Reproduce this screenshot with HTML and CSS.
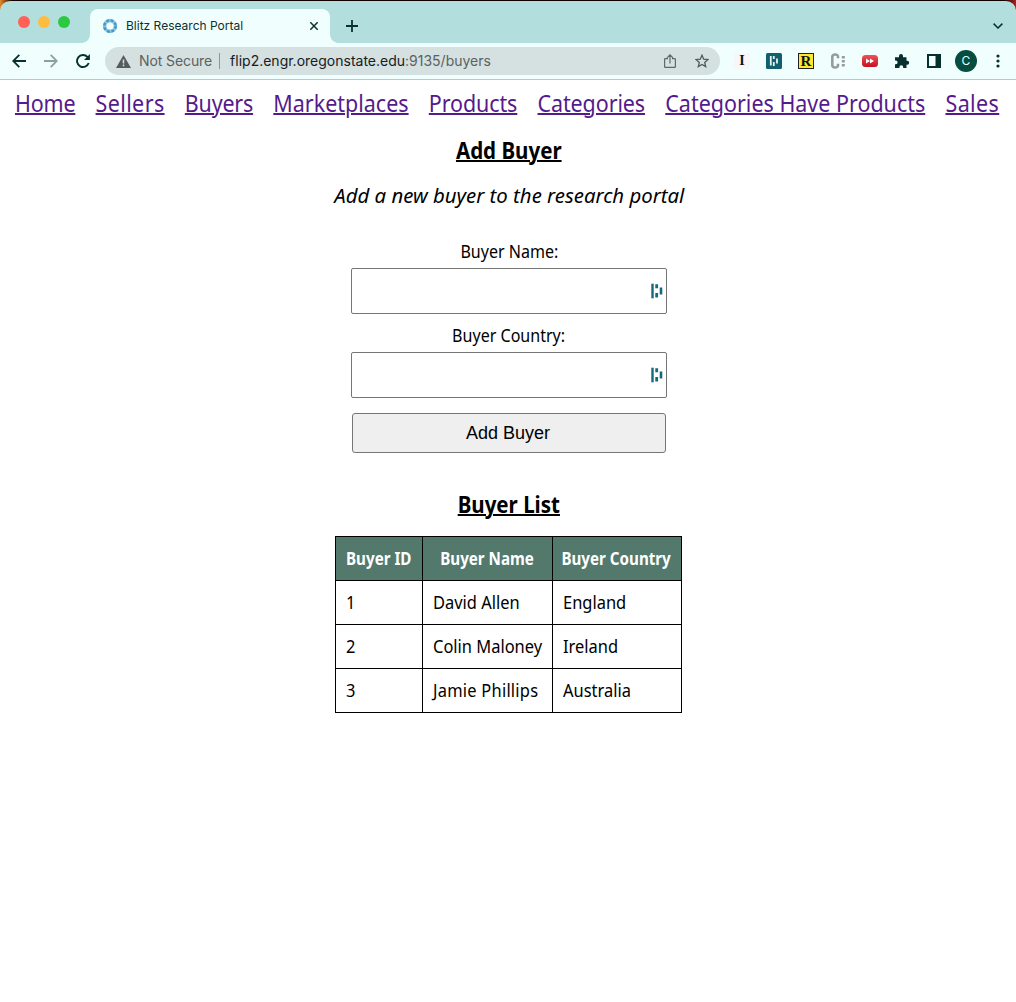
FILE: index.html
```html
<!DOCTYPE html>
<html lang="en">
<head>
<meta charset="utf-8">
<title>Blitz Research Portal</title>
<link rel="stylesheet" href="styles.css">
</head>
<body>
<div class="browser">
  <header class="tabstrip">
    <div class="lights"><i class="light red"></i><i class="light amber"></i><i class="light green"></i></div>
    <div class="tab">
      <svg class="favicon" width="16" height="16" viewBox="0 0 16 16" fill="none"><circle cx="8" cy="8" r="5.400" stroke="#8fc4e3" stroke-width="3.600"/><circle cx="8" cy="8" r="5.700" stroke="#4597c6" stroke-width="2.400" stroke-dasharray="2.800 1.680"/></svg>
      <span class="tab-title">Blitz Research Portal</span>
      <svg class="tab-close" width="10" height="10" viewBox="0 0 10 10" stroke="#0b3030" stroke-width="1.5"><path d="M1.3 1.3l7.4 7.4M8.7 1.3l-7.4 7.4"/></svg>
    </div>
    <svg class="new-tab" width="12" height="12" viewBox="0 0 12 12" stroke="#0b3030" stroke-width="1.8"><path d="M6 0v12M0 6h12"/></svg>
    <svg class="tab-search" width="10" height="6" viewBox="0 0 10 6" fill="none" stroke="#0b3030" stroke-width="1.5"><path d="M.6.6L5 5 9.400.6"/></svg>
  </header>
  <div class="toolbar">
    <svg class="nav-icon" width="14" height="14" viewBox="0 0 14 14" fill="none" stroke="#06302e" stroke-width="1.8"><path d="M14 7H1.500M7.300.8L1.200 7l6.100 6.200"/></svg>
    <svg class="nav-icon" width="14" height="14" viewBox="0 0 14 14" fill="none" stroke="#8aa3a2" stroke-width="1.800"><path d="M0 7h12.500M6.700.8L12.800 7l-6.100 6.200"/></svg>
    <svg class="nav-icon" width="14" height="14" viewBox="0 0 14 14" fill="none" stroke="#06302e" stroke-width="1.900"><path d="M12.700 9A6 6 0 1 1 11.400 2.900L13 4.500"/><path d="M13.900.1v5.900H8z" fill="#06302e" stroke="none"/></svg>
    <div class="omnibox">
      <svg width="15" height="13" viewBox="0 0 15 13"><path d="M7.500 0L15 13H0z" fill="#565c5c"/><path d="M7.500 4.500v4M7.500 9.500v1.700" stroke="#d5e0e0" stroke-width="1.500"/></svg>
      <span class="not-secure">Not Secure</span>
      <span class="divider"></span>
      <span class="url"><b>flip2.engr.oregonstate.edu</b>:9135/buyers</span>
      <svg class="share" width="12" height="14" viewBox="0 0 12 14" fill="none" stroke="#5d6b6b" stroke-width="1.200"><path d="M4 4.600H1.200A.6.6 0 0 0 .6 5.200v7.600a.6.6 0 0 0 .6.6h9.600a.6.6 0 0 0 .6-.6V5.200a.6.6 0 0 0-.6-.6H8M6 9.500V1M3 3.800l3-3 3 3"/></svg>
      <svg width="14" height="14" viewBox="0 0 14 14" fill="none" stroke="#4f5d5d" stroke-width="1.300"><path d="M7 1.200l1.700 4 4.300.4-3.300 2.800 1 4.200L7 10.400l-3.700 2.200 1-4.200L1 5.600l4.300-.4z"/></svg>
    </div>
    <div class="extensions">
      <span class="ext ext-i">I</span>
      <svg width="16" height="16" viewBox="0 0 16 16"><rect width="16" height="16" rx="1.500" fill="#116070"/><path d="M4.800 3v9.500M7.800 3v3M7.800 9v4M11 5.500v5" stroke="#e6f3f3" stroke-width="1.800"/></svg>
      <span class="ext ext-r">R</span>
      <svg width="16" height="16" viewBox="0 0 16 16" fill="none" stroke="#969b9b"><path d="M8 5.200V4Q8 1.500 5.200 1.500T2.300 4v8q0 2.500 2.900 2.500T8 12v-1.200" stroke-width="2.600"/><path d="M13.300 3v11" stroke-width="3" stroke-dasharray="2.600 1.400"/></svg>
      <svg width="16" height="16" viewBox="0 0 16 16"><defs><linearGradient id="red" x1="0" y1="0" x2="0" y2="1"><stop stop-color="#f05258"/><stop offset="1" stop-color="#c5101e"/></linearGradient></defs><rect y="2" width="16" height="12" rx="3.500" fill="url(#red)"/><path d="M4 5.500L8 8l-4 2.500zM8 5.500L12 8l-4 2.500z" fill="#fff"/></svg>
      <svg width="16" height="16" viewBox="0 0 16 16"><path d="M1 4.300h4V3a2 2 0 0 1 4 0v1.300h3.500v3.500h.7a2 2 0 0 1 0 4h-.7V15H9.200v-.8a1.900 1.900 0 0 0-3.800 0v.8H1v-3.800h.8a1.800 1.800 0 0 0 0-3.600H1z" fill="#062f2d"/></svg>
      <svg width="16" height="16" viewBox="0 0 16 16"><path d="M1 1h14v14H1zM3 3v10h6.500V3z" fill="#06302e" fill-rule="evenodd"/></svg>
      <span class="avatar">C</span>
      <svg class="kebab" width="4" height="14" viewBox="0 0 4 14" fill="#06302e"><circle cx="2" cy="2" r="1.600"/><circle cx="2" cy="7" r="1.600"/><circle cx="2" cy="12" r="1.600"/></svg>
    </div>
  </div>
</div>
<nav class="site-nav">
  <a href="#">Home</a><a href="#">Sellers</a><a href="#">Buyers</a><a href="#">Marketplaces</a><a href="#">Products</a><a href="#">Categories</a><a href="#">Categories Have Products</a><a href="#">Sales</a>
</nav>
<main>
  <h2>Add Buyer</h2>
  <p class="intro">Add a new buyer to the research portal</p>
  <form class="buyer-form">
    <label for="name">Buyer Name:</label>
    <div class="field"><input id="name" type="text"><svg width="12" height="16" viewBox="0 0 12 16" stroke="#16697a"><path d="M1.500 .7v14.600" stroke-width="2.400"/><path d="M5.700 1.200v4M5.700 10v4.500" stroke-width="2.800"/><path d="M10 4.500v7" stroke-width="2.600"/></svg></div>
    <label for="country">Buyer Country:</label>
    <div class="field"><input id="country" type="text"><svg width="12" height="16" viewBox="0 0 12 16" stroke="#16697a"><path d="M1.500 .7v14.600" stroke-width="2.400"/><path d="M5.700 1.200v4M5.700 10v4.500" stroke-width="2.800"/><path d="M10 4.500v7" stroke-width="2.600"/></svg></div>
    <button type="button">Add Buyer</button>
  </form>
  <h2 class="list-title">Buyer List</h2>
  <table>
    <colgroup><col class="col-id"><col class="col-name"><col class="col-country"></colgroup>
    <thead><tr><th><span>Buyer ID</span></th><th><span>Buyer Name</span></th><th><span>Buyer Country</span></th></tr></thead>
    <tbody>
      <tr><td><span>1</span></td><td><span>David Allen</span></td><td><span>England</span></td></tr>
      <tr><td><span>2</span></td><td><span>Colin Maloney</span></td><td><span>Ireland</span></td></tr>
      <tr><td><span>3</span></td><td><span class="loose">Jamie Phillips</span></td><td><span>Australia</span></td></tr>
    </tbody>
  </table>
</main>
</body>
</html>
```
FILE: styles.css
```css
* { box-sizing: border-box; }
body { margin: 0; background: #fff; color: #000; font-family: "Noto Sans", sans-serif; }

.browser { font-family: Inter, sans-serif; background: linear-gradient(90deg, #e98a2c, #100 12px, #100 1004px, #a22); }
.tabstrip { display: flex; height: 43px; border-top: 1px solid transparent; background: #b2dfdd; background-clip: padding-box; border-radius: 10px 10px 0 0; padding-right: 13px; }
.lights { display: flex; gap: 8px; padding: 15px 0 0 18px; width: 90px; }
.light { width: 12px; height: 12px; border-radius: 50%; }
.red { background: #ff6159; }
.amber { background: #ffbd40; }
.green { background: #2bc840; }
.tab { position: relative; display: flex; align-items: center; width: 240px; margin-top: 8px; padding: 0 11px 0 12px; background: #f0fffe; border-radius: 8px 8px 0 0; }
.tab::before, .tab::after { content: ""; position: absolute; bottom: 0; width: 8px; height: 8px; }
.tab::before { left: -8px; background: radial-gradient(circle at 0 0, transparent 7.5px, #f0fffe 8px); }
.tab::after { right: -8px; background: radial-gradient(circle at 100% 0, transparent 7.5px, #f0fffe 8px); }
.tab-title { margin: 0 0 2px 8px; font-size: 12px; color: #0b3030; }
.tab-close { margin-left: auto; }
.new-tab { margin: 19px 0 0 16px; }
.tab-search { margin: 22px 0 0 auto; }
.toolbar { display: flex; align-items: center; height: 37px; padding: 0 16px 0 12px; background: #f0fffe; border-bottom: 1px solid #b9c9c8; }
.nav-icon { flex: none; margin-right: 18px; }
.omnibox { display: flex; align-items: center; flex: none; width: 615px; height: 28px; margin-left: -3px; padding: 0 11px; border-radius: 14px; background: #d5e0e0; font-size: 14px; color: #5a6262; }
.omnibox span { padding-bottom: 1px; }
.not-secure { margin-left: 8px; letter-spacing: -.1px; }
.divider { width: 1px; height: 16px; margin: 0 10px 0 7px; background: #8d9696; }
.url b { font-weight: 400; color: #14201f; }
.share { margin: 0 19px 0 auto; }
.extensions { display: flex; align-items: center; gap: 16px; margin-left: 14px; }
.ext { width: 16px; height: 16px; text-align: center; font: bold 14px/16px "Liberation Serif", serif; color: #111; }
.ext-i { background: #f7f7f7; }
.ext-r { background: #ffe92e; border: 1px solid #222; font-size: 15px; line-height: 14px; }
.avatar { width: 22px; height: 22px; margin: 0 -3px; border-radius: 50%; background: #054d40; color: #e8fffa; font-size: 12px; line-height: 22px; text-align: center; }
.kebab { margin-left: 6px; }

.site-nav { display: flex; gap: 22.6px; height: 48px; padding: 6px 0 0 16.7px; font-size: 24px; line-height: 33px; white-space: nowrap; transform: scaleX(.895); transform-origin: 0 0; }
.site-nav a { flex: none; color: #551a8b; text-decoration-thickness: 2px; }
.site-nav a:nth-child(1) { letter-spacing: -.2px; }
.site-nav a:nth-child(2), .site-nav a:nth-child(8) { letter-spacing: .44px; }
.site-nav a:nth-child(3) { letter-spacing: -.22px; }
.site-nav a:nth-child(5), .site-nav a:nth-child(6) { letter-spacing: -.11px; }
main { display: flex; flex-direction: column; align-items: center; }
h2 { margin: 5px 0 0 1px; font-size: 24px; line-height: 34px; text-decoration: underline; text-decoration-thickness: 2px; transform: scaleX(.855); }
.intro { margin: 12px 0 0 2px; font-size: 20.5px; line-height: 32px; font-style: italic; transform: scaleX(.993); }
.buyer-form { display: flex; flex-direction: column; align-items: center; width: 316px; margin: 28px 0 0 2px; font-size: 17.5px; }
label { height: 28px; line-height: 24px; transform: scaleX(.917); }
.field { position: relative; width: 316px; height: 46px; margin-bottom: 10px; }
.field:first-of-type { margin-top: 1px; }
.field input { width: 100%; height: 46px; border: 1px solid #767676; border-radius: 2px; }
.field svg { position: absolute; right: 4px; top: 15px; }
label + .field + label { margin-top: -1px; margin-bottom: 1px; }
button { width: 314px; height: 40px; margin-top: 5px; padding: 0 2px 0 0; border: 1px solid #767676; border-radius: 3px; background: #efefef; color: #000; font: 18px "Liberation Sans", sans-serif; }
.list-title { margin-top: 34px; }
table { width: 347px; margin-top: 15px; border-collapse: collapse; table-layout: fixed; font-size: 17.5px; line-height: 24px; }
.col-id { width: 87px; }
.col-name { width: 130px; }
.col-country { width: 129px; }
th, td { height: 44px; padding: 0 10px 2px; border: 1px solid #000; text-align: left; white-space: nowrap; }
td span { display: inline-block; transform: scaleX(.94); transform-origin: 0 50%; }
td .loose { letter-spacing: .25px; }
th { padding: 0 0 2px; background: #53796d; color: #fff; text-align: center; }
th span { display: inline-block; transform: scaleX(.867); }
```
